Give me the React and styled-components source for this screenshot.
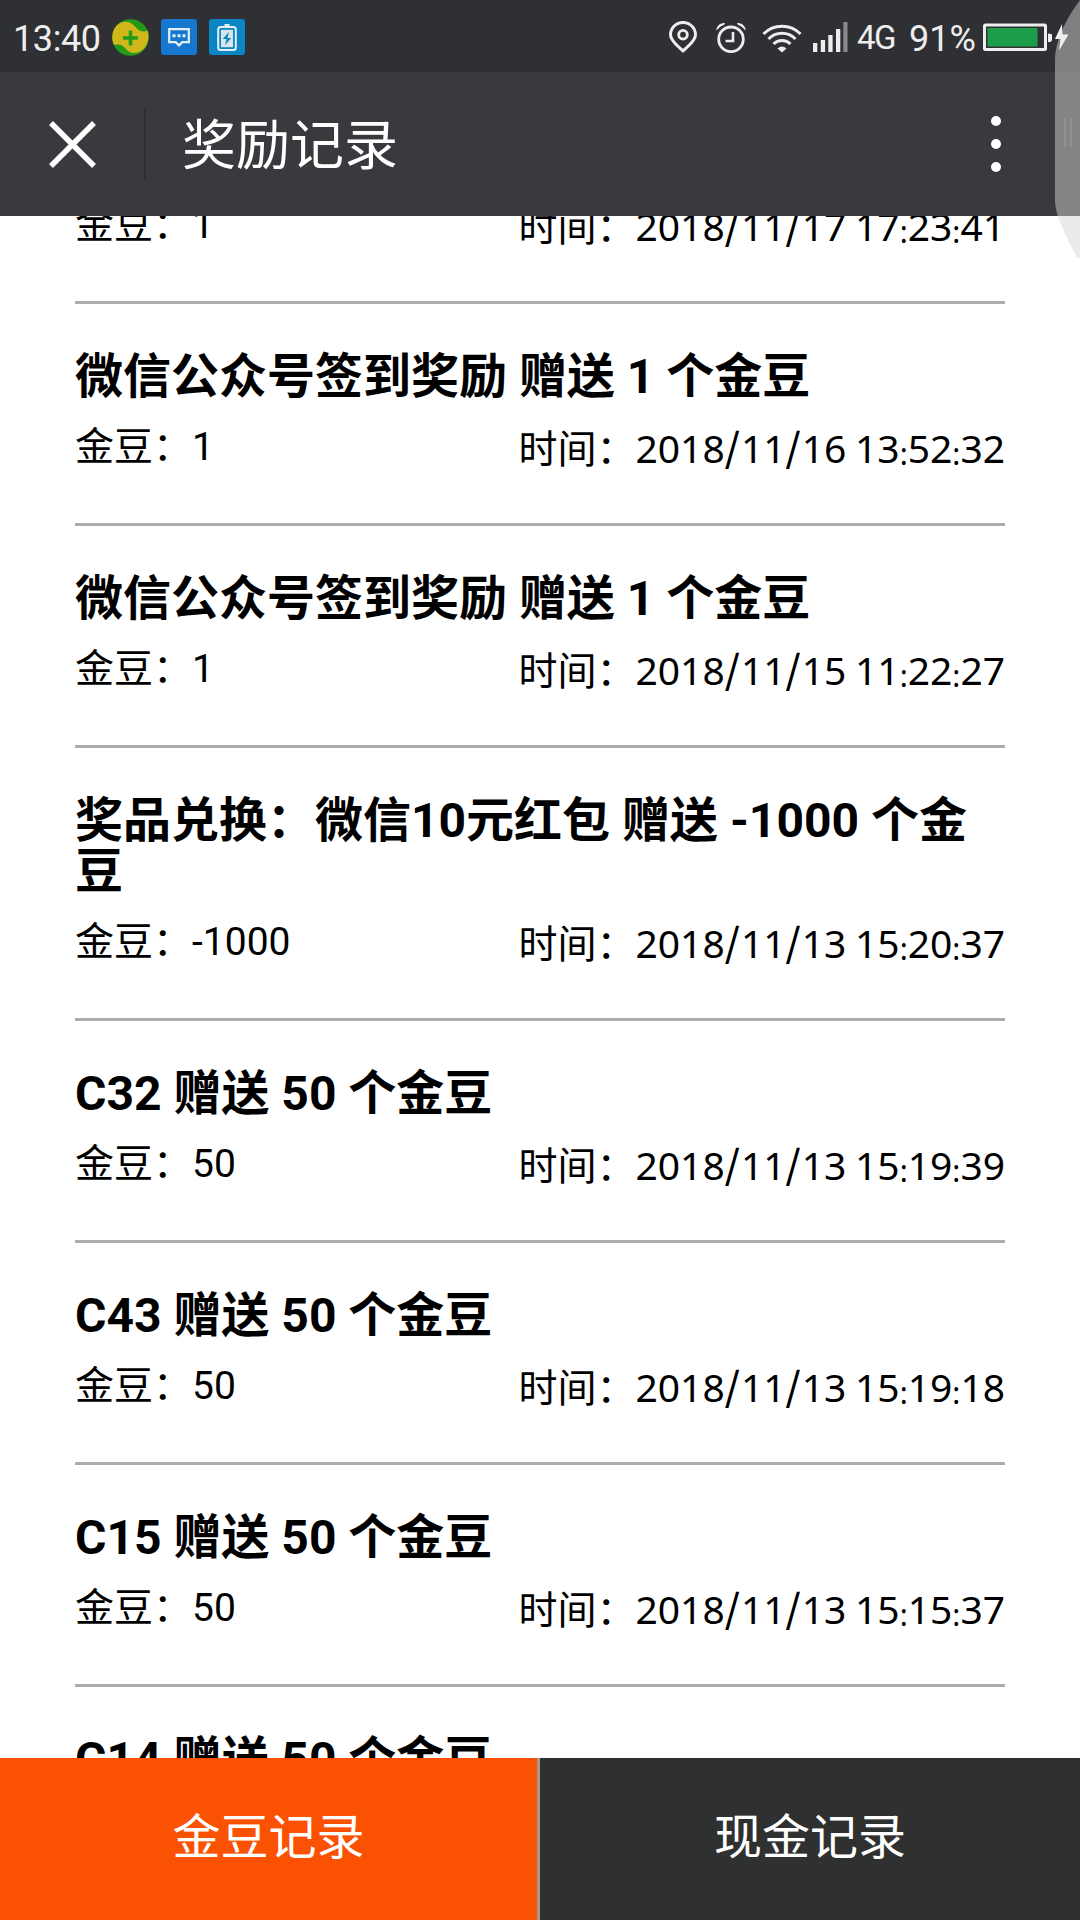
import React from "react";
import styled, { createGlobalStyle } from "styled-components";

// first and last rows are only partly scrolled into view
const records = [
  { id: 1, beans: "1", date: "2018/11/17", time: "17:23:41" },
  { id: 2, title: "微信公众号签到奖励 赠送 1 个金豆", beans: "1", date: "2018/11/16", time: "13:52:32" },
  { id: 3, title: "微信公众号签到奖励 赠送 1 个金豆", beans: "1", date: "2018/11/15", time: "11:22:27" },
  { id: 4, title: "奖品兑换：微信10元红包 赠送 -1000 个金豆", beans: "-1000", date: "2018/11/13", time: "15:20:37" },
  { id: 5, title: "C32 赠送 50 个金豆", beans: "50", date: "2018/11/13", time: "15:19:39" },
  { id: 6, title: "C43 赠送 50 个金豆", beans: "50", date: "2018/11/13", time: "15:19:18" },
  { id: 7, title: "C15 赠送 50 个金豆", beans: "50", date: "2018/11/13", time: "15:15:37" },
  { id: 8, title: "C14 赠送 50 个金豆" },
];

const StatusBar = () => {
  return (
    <StatusDiv>
      <Clock>13:40</Clock>
      <AppIcons>
        <svg width="37" height="37" viewBox="0 0 37 37">
          <circle cx="18.5" cy="18.5" r="18.3" fill="#25991a" />
          <path
            d="M.4 21C-.8 9 7 1.500 16 3C23 4 24 13 33 12.500Q35 12.200 35.800 11.500C38.500 22 33 33 23 34C13 34.500 14 24.500 5 25.500Q2 26 1.500 25Z"
            fill="#d0b81a"
          />
          <path d="M18.500 11.500v15M11 19h15" stroke="#25991a" strokeWidth="3.500" />
        </svg>
        <svg width="36" height="36" viewBox="0 0 36 36">
          <rect width="36" height="36" rx="3" fill="#1577cf" />
          <path
            d="M8.200 10.200h19.600v13h-6.500l-3.300 3.200l-3.300-3.200h-6.500z"
            fill="none"
            stroke="#e6eef6"
            strokeWidth="2.200"
          />
          <path d="M11.500 15.300h3v3h-3zM16.500 15.300h3v3h-3zM21.500 15.300h3v3h-3z" fill="#e6eef6" />
        </svg>
        <svg width="36" height="36" viewBox="0 0 36 36">
          <rect width="36" height="36" rx="3" fill="#0a86c4" />
          <rect x="15.500" y="5" width="5" height="2.500" fill="#e6eef6" />
          <rect x="9.200" y="8" width="17.600" height="23" rx="2.500" fill="none" stroke="#e6eef6" strokeWidth="2" />
          <rect x="12" y="10.800" width="12" height="17.400" fill="#d8e4ea" />
          <path d="M19.800 13l-6 7h3.700l-1.400 6.300l6-7.300h-3.600z" fill="#0a86c4" />
        </svg>
      </AppIcons>
      <SystemIcons>
        <PinIcon width="28" height="32" viewBox="0 0 28 32">
          <path
            d="M14 29.800C10 26 1.500 20.500 1.500 13.800A12.500 12.400 0 0 1 26.500 13.800C26.500 20.500 18 26 14 29.800Z"
            fill="none"
            stroke="#eee"
            strokeWidth="3"
          />
          <circle cx="14" cy="13.700" r="4.300" fill="none" stroke="#eee" strokeWidth="2.800" />
        </PinIcon>
        <AlarmIcon width="30" height="31" viewBox="0 0 30 31">
          <circle cx="15" cy="17.300" r="12.300" fill="none" stroke="#eee" strokeWidth="2.800" />
          <path d="M17 10v9h-7.500" fill="none" stroke="#eee" strokeWidth="2.600" />
          <path d="M.3 7.500C1.500 3 4.500 1 9 1L8 3C5 4 3 5.500.8 8.300ZM29.700 7.500C28.500 3 25.500 1 21 1L22 3C25 4 27 5.500 29.200 8.300Z" fill="#eee" />
        </AlarmIcon>
        <WifiIcon width="40" height="31" viewBox="0 0 40 31">
          <g fill="none" stroke="#eee" strokeWidth="3">
            <path d="M1.500 12A26 26 0 0 1 38.500 12" />
            <path d="M6.500 17A19 19 0 0 1 33.500 17" />
            <path d="M11.500 22A12 12 0 0 1 28.500 22" />
          </g>
          <path d="M15.500 26.500Q20 22.500 24.500 26.500L20 30.500Z" fill="#eee" />
        </WifiIcon>
        <SignalIcon width="35" height="30" viewBox="0 0 35 30">
          <path d="M0 21h4.300v9H0zM7.800 18h4.300v12H7.800zM15.300 13h4.300v17h-4.300zM23 7h4.300v23H23z" fill="#eee" />
          <path d="M30.300 0h4.200v30h-4.200z" fill="#88898b" />
        </SignalIcon>
        <Network>4G</Network>
        <Percent>91%</Percent>
        <svg width="86" height="28" viewBox="0 0 86 28">
          <rect x="1.500" y="2" width="61" height="24.500" rx="1" fill="none" stroke="#eee" strokeWidth="3" />
          <rect x="4.500" y="5" width="50" height="18.500" fill="#1c9d49" />
          <path d="M65 10.500q4 0 4 1.500v5q0 2-4 2z" fill="#eee" />
          <path d="M79 1l-7 15h5.500l-1.500 11.500l9.500-16h-6z" fill="#eee" />
        </svg>
      </SystemIcons>
    </StatusDiv>
  );
};

const Record = ({ record }) => {
  return (
    <RecordItem>
      {record.title && <RecordTitle>{record.title}</RecordTitle>}
      {record.date && (
        <RecordInfo>
          <span>金豆：{record.beans}</span>
          <Time>
            时间：
            {record.date.split("/").map((part, i) => (
              <React.Fragment key={i}>
                {i > 0 && <Slash>/</Slash>}
                {part}
              </React.Fragment>
            ))}{" "}
            {record.time.split(":").map((part, i) => (
              <React.Fragment key={i}>
                {i > 0 && <Colon>:</Colon>}
                {part}
              </React.Fragment>
            ))}
          </Time>
        </RecordInfo>
      )}
    </RecordItem>
  );
};

const App = () => {
  return (
    <Screen>
      <GlobalStyle />
      <StatusBar />
      <Header>
        <CloseBtn>
          <svg width="47" height="47" viewBox="0 0 47 47">
            <path d="M2 2l43 43M45 2l-43 43" stroke="#fff" strokeWidth="5.500" />
          </svg>
        </CloseBtn>
        <Title>奖励记录</Title>
        <MoreBtn>
          <svg width="10" height="56" viewBox="0 0 10 56" fill="#fff">
            <circle cx="5" cy="5" r="5" />
            <circle cx="5" cy="28" r="5" />
            <circle cx="5" cy="51" r="5" />
          </svg>
        </MoreBtn>
      </Header>
      <List>
        <Records>
          {records.map((record) => (
            <Record key={record.id} record={record} />
          ))}
        </Records>
      </List>
      <Tabs>
        <Tab $active>金豆记录</Tab>
        <Tab>现金记录</Tab>
      </Tabs>
      <EdgePanel width="25" height="258" viewBox="0 0 25 258">
        <path
          d="M25 0C15 14 2 34 0 57V202C1 218 12 238 22 258H25Z"
          fill="rgba(213, 213, 213, 0.485)"
        />
        <path d="M10 118v29M16 118v29" stroke="#909193" strokeWidth="2" />
      </EdgePanel>
    </Screen>
  );
};

export default App;

const GlobalStyle = createGlobalStyle`
  * {
    box-sizing: border-box;
  }
  body {
    margin: 0;
    font-family: Roboto, "Noto Sans CJK SC", sans-serif;
  }
  svg {
    display: block;
    flex-shrink: 0;
  }
`;

const Screen = styled.div`
  position: relative;
  display: flex;
  flex-direction: column;
  width: 1080px;
  height: 1920px;
  overflow: hidden;
  background-color: #fff;
  color: #000;
`;

const StatusDiv = styled.div`
  display: flex;
  align-items: center;
  height: 72px;
  padding: 2px 11px 0 13px;
  background-color: #2f3034;
  color: #eee;
`;

const Clock = styled.span`
  width: 99px;
  padding-top: 4px;
  font-size: 36px;
  letter-spacing: -0.4px;
`;

const AppIcons = styled.div`
  display: flex;
  align-items: center;
  gap: 12px;
`;

/* stays above the edge panel so the charging bolt is not dimmed */
const SystemIcons = styled.div`
  position: relative;
  z-index: 1;
  display: flex;
  align-items: center;
  margin-left: auto;
`;

const PinIcon = styled.svg`
  margin-right: 19px;
`;

const AlarmIcon = styled.svg`
  margin-right: 16px;
`;

const WifiIcon = styled.svg`
  margin-right: 11px;
`;

const SignalIcon = styled.svg`
  margin-right: 9px;
`;

const Network = styled.span`
  width: 52px;
  font-size: 33px;
  letter-spacing: -1.5px;
`;

const Percent = styled.span`
  width: 74px;
  padding-top: 4px;
  font-size: 36px;
`;

const Header = styled.div`
  display: flex;
  align-items: center;
  height: 144px;
  background-color: #393a3e;
  color: #fff;
`;

const CloseBtn = styled.button`
  width: 146px;
  height: 72px;
  padding: 0 0 0 49px;
  border: none;
  border-right: 2px solid #2e2f33;
  background-color: transparent;
`;

const Title = styled.h1`
  flex: 1;
  margin: 0;
  padding: 0 0 6px 36px;
  font-size: 54px;
  font-weight: 400;
`;

const MoreBtn = styled.button`
  margin-right: 79px;
  padding: 0;
  border: none;
  background-color: transparent;
`;

const List = styled.div`
  flex: 1;
  min-height: 0;
  overflow: hidden;
`;

const Records = styled.ul`
  display: flex;
  flex-direction: column;
  margin: -83px 75px 0;
  padding: 0;
  list-style: none;
`;

const RecordItem = styled.li`
  padding-top: 47px;
  border-bottom: 3px solid #acacac;
`;

const RecordTitle = styled.h2`
  margin: 0;
  font-size: 48px;
  font-weight: 700;
  line-height: 51px;
`;

const RecordInfo = styled.div`
  display: flex;
  justify-content: space-between;
  height: 121px;
  padding-top: 23px;
  font-size: 39px;
  line-height: 45px;
`;

const Time = styled.span`
  font-family: "Noto Sans", "Noto Sans CJK SC", sans-serif;
  word-spacing: -1.5px;
`;

const Slash = styled.span`
  font-family: "Noto Sans CJK SC", sans-serif;
  font-weight: 500;
  letter-spacing: 1px;
  line-height: 0;
  vertical-align: 1px;
`;

const Colon = styled.span`
  font-size: 30px;
  line-height: 0;
  vertical-align: -2px;
`;

const Tabs = styled.div`
  display: flex;
  height: 162px;
`;

const Tab = styled.button`
  width: 50%;
  padding: 0 0 12px;
  border: none;
  border-right: ${(props) => (props.$active ? "3px solid #a8988c" : "none")};
  background-color: ${(props) => (props.$active ? "#fb5103" : "#2f3030")};
  color: #fff;
  font-family: inherit;
  font-size: 48px;
`;

const EdgePanel = styled.svg`
  position: absolute;
  top: 0;
  right: 0;
`;
